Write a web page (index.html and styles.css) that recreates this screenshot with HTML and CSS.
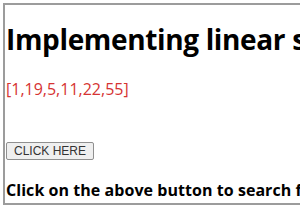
FILE: index.html
```html
<!DOCTYPE html>
<html>
<head>
<meta charset="utf-8">
<link rel="stylesheet" href="styles.css">
</head>
<body>
<div class="frame">
  <h1 class="title">Implementing linear search in JavaScript</h1>
  <p class="array">[1,19,5,11,22,55]</p>
  <button class="btn">CLICK HERE</button>
  <h3 class="note">Click on the above button to search for an element</h3>
</div>
</body>
</html>
```
FILE: styles.css
```css
html, body {
  margin: 0;
  padding: 0;
  background: #fff;
  overflow: hidden;
}
.frame {
  margin: 3px 0 0 3px;
  width: 600px;
  height: 202px;
  box-sizing: border-box;
  border: 2px solid #9c9c9c;
  border-right: none;
  padding: 0 0 0 1px;
  font-family: "Open Sans", "Noto Sans", sans-serif;
  white-space: nowrap;
}
.title {
  font-size: 28px;
  font-weight: 700;
  letter-spacing: -0.35px;
  color: #000;
  margin: 16px 0 0 0;
  line-height: 36px;
}
.array {
  color: #d63333;
  font-size: 16px;
  margin: 21px 0 0 0;
  line-height: 22px;
}
.btn {
  display: block;
  margin: 42px 0 0 0;
  font-family: "Liberation Sans", Arial, sans-serif;
  font-size: 12px;
  color: #333;
  background: #efefef;
  border: 1px solid #8f8f8f;
  border-radius: 2px;
  padding: 1px 7px;
  height: 18px;
  line-height: 14px;
}
.note {
  font-size: 16px;
  font-weight: 700;
  letter-spacing: 0.05px;
  margin: 19px 0 0 0;
  line-height: 22px;
}
```
